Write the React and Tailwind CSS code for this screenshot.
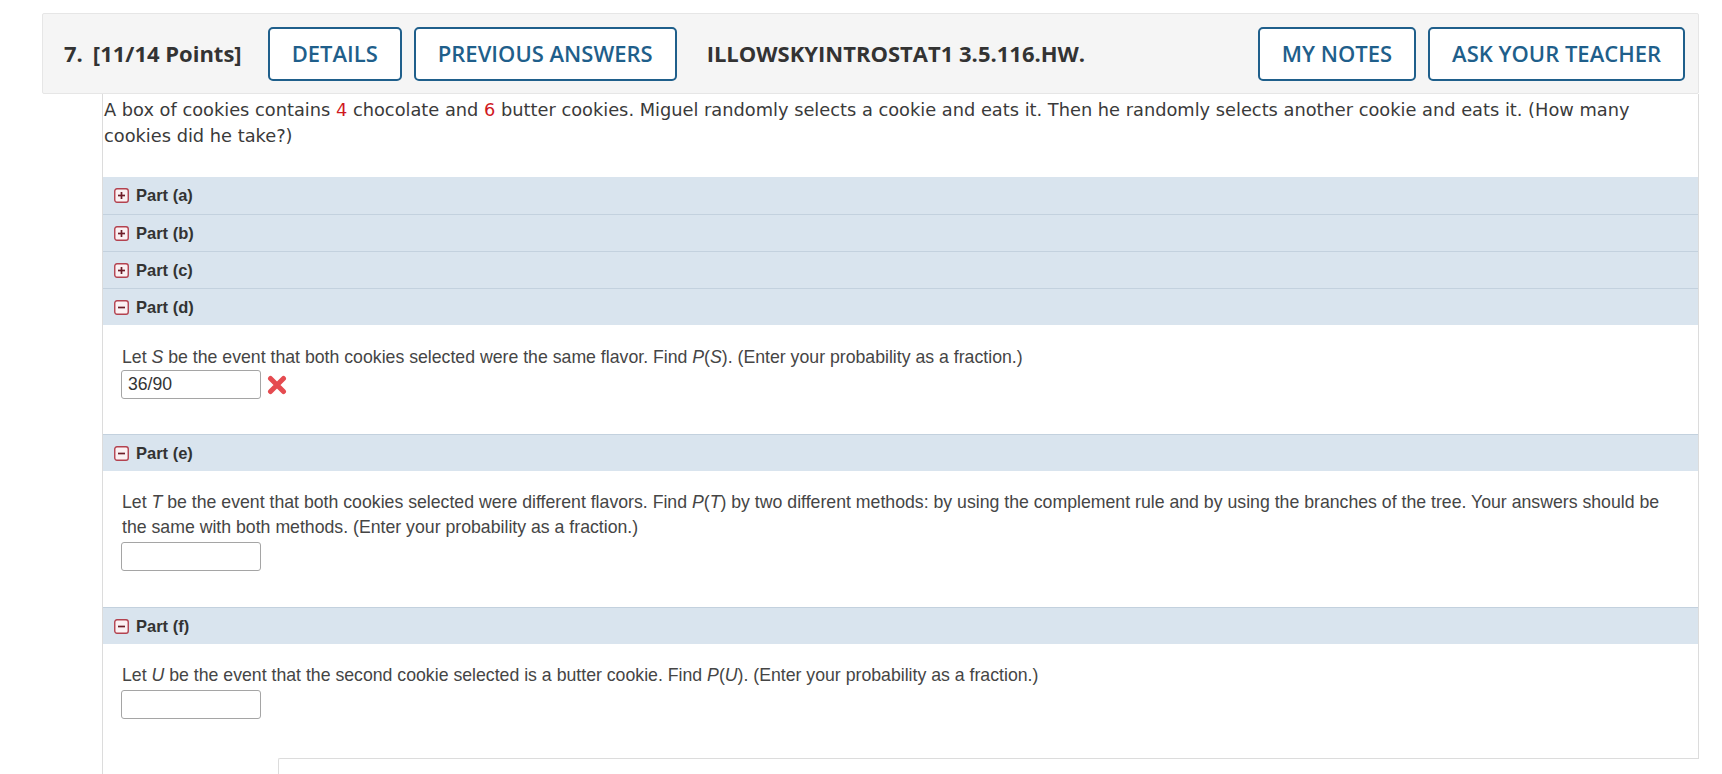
import React from "react";

function PartIcon({ open }) {
  return (
    <svg width="15" height="15" viewBox="0 0 15 15" className="shrink-0">
      <rect x="0.75" y="0.75" width="13.5" height="13.5" rx="2.2" fill="#fbf1f3" stroke="#b3424f" strokeWidth="1.4" />
      <line x1="4" y1="7.5" x2="11" y2="7.5" stroke="#6e1d28" strokeWidth="1.7" />
      {!open && <line x1="7.5" y1="4" x2="7.5" y2="11" stroke="#6e1d28" strokeWidth="1.7" />}
    </svg>
  );
}

function PartRow({ label, open, first }) {
  return (
    <div
      className={
        "h-[37px] bg-[#d9e4ee] flex items-center pl-[11px] gap-[7px] " +
        (first ? "" : "border-t border-[#c3d1de]")
      }
    >
      <PartIcon open={open} />
      <span className="text-[16.5px] font-bold text-[#333] font-['Liberation_Sans',Arial,sans-serif]">{label}</span>
    </div>
  );
}

function Input({ value }) {
  return (
    <div className="w-[140px] h-[29px] border border-[#a5a5a5] rounded-[3px] bg-white flex items-center pl-[6px] text-[17.6px] text-[#333]">
      {value}
    </div>
  );
}

function RedX() {
  return (
    <svg width="20" height="20" viewBox="0 0 20 20" className="ml-[6px]">
      <path d="M3.5 3.5 L16.5 16.5 M16.5 3.5 L3.5 16.5" stroke="#e54b50" strokeWidth="5" strokeLinecap="round" />
    </svg>
  );
}

export default function App() {
  const btn =
    "h-[54px] px-[22px] border-2 border-[#1f5f8b] rounded-[5px] text-[#1f5f8b] text-[22px] font-semibold flex items-center bg-white";
  return (
    <div className="w-[1722px] h-[774px] overflow-hidden bg-white pl-[42px] pr-[23px] pt-[13px]">
      {/* header */}
      <div className="h-[81px] bg-[#f5f5f5] border border-[#e6e6e6] rounded-[2px] flex items-center pl-[21px] pr-[13px] font-['Open_Sans',sans-serif]">
        <div className="text-[22px] font-bold text-[#333] flex gap-[10px]">
          <span>7.</span>
          <span>[11/14 Points]</span>
        </div>
        <div className="flex gap-[12px] ml-[26px]">
          <div className={btn}>DETAILS</div>
          <div className={btn}>PREVIOUS ANSWERS</div>
        </div>
        <div className="ml-[30px] text-[22px] font-bold text-[#333]">ILLOWSKYINTROSTAT1 3.5.116.HW.</div>
        <div className="flex gap-[12px] ml-auto">
          <div className={btn}>MY NOTES</div>
          <div className={btn}>ASK YOUR TEACHER</div>
        </div>
      </div>

      {/* body */}
      <div className="ml-[60px] border-l border-[#dcdcdc]">
        <div className="border-r border-[#dcdcdc]">
          <div className="pl-[1px] pt-[3px] pb-[28px] text-[17.8px] leading-[26px] text-[#3a3a3a] font-['DejaVu_Sans',Verdana,sans-serif] whitespace-nowrap">
            A box of cookies contains <span className="text-[#d0191f]">4</span> chocolate and{" "}
            <span className="text-[#d0191f]">6</span> butter cookies. Miguel randomly selects a cookie and eats it. Then he randomly selects another cookie and eats it. (How many
            <br />
            cookies did he take?)
          </div>

          <div className="font-['Liberation_Sans',Arial,sans-serif]">
            <PartRow label="Part (a)" first />
            <PartRow label="Part (b)" />
            <PartRow label="Part (c)" />
            <PartRow label="Part (d)" open />
            <div className="pl-[19px] pt-[20px] pb-[35px] text-[17.7px] leading-[25px] text-[#454545]">
              <div>
                Let <i>S</i> be the event that both cookies selected were the same flavor. Find <i>P</i>(<i>S</i>). (Enter your probability as a fraction.)
              </div>
              <div className="flex items-center -ml-[1px]">
                <Input value="36/90" />
                <RedX />
              </div>
            </div>
            <PartRow label="Part (e)" open />
            <div className="pl-[19px] pt-[19px] pb-[36px] text-[17.7px] leading-[25px] text-[#454545]">
              <div className="whitespace-nowrap">
                Let <i>T</i> be the event that both cookies selected were different flavors. Find <i>P</i>(<i>T</i>) by two different methods: by using the complement rule and by using the branches of the tree. Your answers should be
                <br />
                the same with both methods. (Enter your probability as a fraction.)
              </div>
              <div className="-ml-[1px] mt-[2px]">
                <Input value="" />
              </div>
            </div>
            <PartRow label="Part (f)" open />
            <div className="pl-[19px] pt-[19px] pb-[39px] text-[17.7px] leading-[25px] text-[#454545]">
              <div>
                Let <i>U</i> be the event that the second cookie selected is a butter cookie. Find <i>P</i>(<i>U</i>). (Enter your probability as a fraction.)
              </div>
              <div className="-ml-[1px] mt-[2px]">
                <Input value="" />
              </div>
            </div>
          </div>
        </div>
        <div className="flex">
          <div className="w-[175px] pl-[18px] pt-[16px]">
            <div className="w-[137px] h-[30px] border-t-2 border-[#a8a8a8] bg-[#ececec]" />
          </div>
          <div className="flex-1 h-[40px] border-t border-l border-[#dcdcdc] rounded-tl-[2px]" />
        </div>
      </div>
    </div>
  );
}
